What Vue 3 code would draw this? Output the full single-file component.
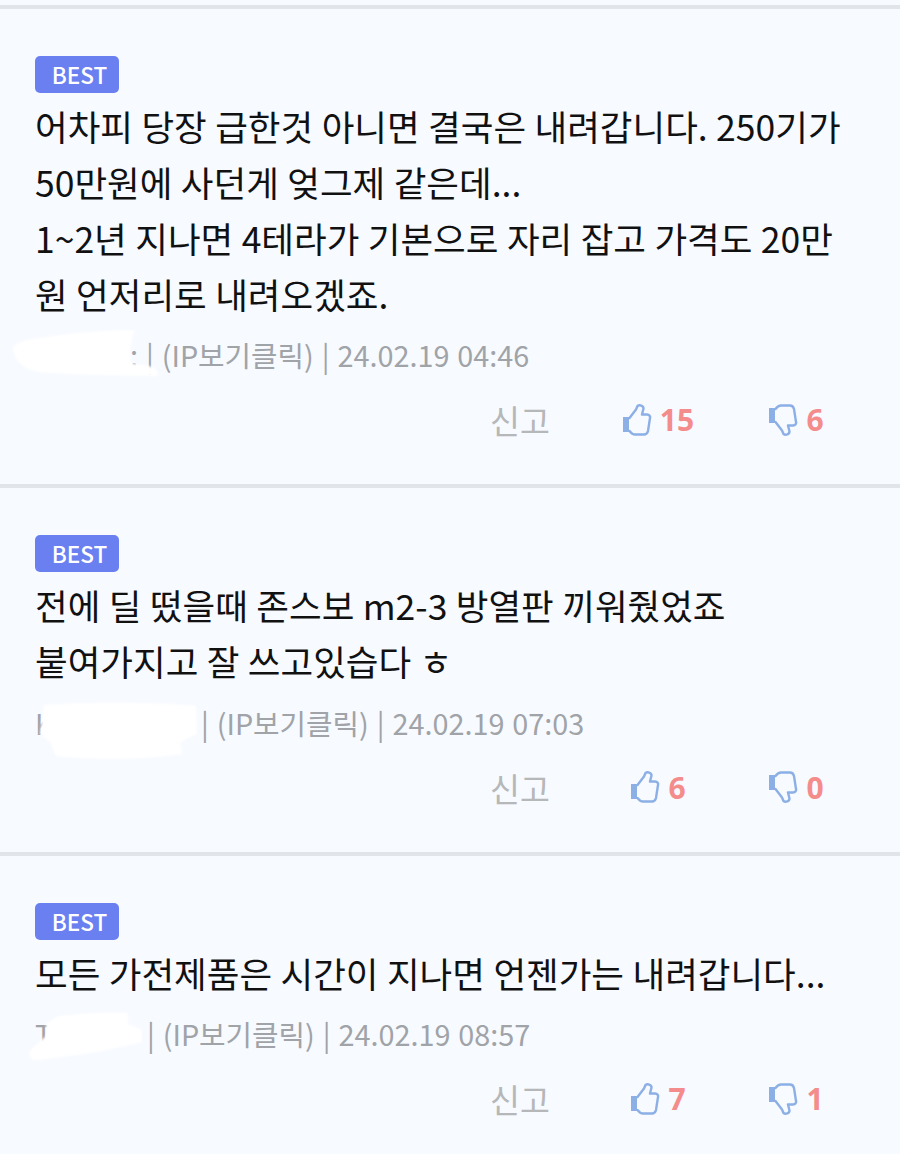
<template>
  <div class="comment-list">
    <div v-for="c in comments" :key="c.date" class="comment">
      <div class="badge">BEST</div>
      <div class="body">
        <p v-for="line in c.lines" :key="line">{{ line }}</p>
      </div>
      <div class="meta">
        <span class="nick" :style="{ width: c.nickWidth + 'px' }">
          <span>{{ c.nick[0] }}</span>
          <span>{{ c.nick[1] }}</span>
        </span>
        <span class="info">| (IP보기클릭) | {{ c.date }}</span>
        <svg class="blob" viewBox="0 0 240 90" aria-hidden="true">
          <path :d="c.blob" fill="#fff" />
        </svg>
      </div>
      <div class="actions">
        <span class="report">신고</span>
        <span class="vote">
          <svg class="hand" viewBox="0 0 30 32">
            <path class="cuff" d="M1 13h6v15H1z" />
            <path class="outline" d="M7.500 14 14 5.500 15.500 2c2-1.500 6-.5 6 2.500L20 10.500h5c2.500 0 3.500 2 3 3.500l-2 13c-.5 2-2 3.500-4 3.500H13c-2 0-4-1.500-5.500-3.500" />
          </svg>
          <b>{{ c.up }}</b>
        </span>
        <span class="vote">
          <svg class="hand" viewBox="0 0 30 32">
            <g transform="matrix(1 0 0 -1 0 32)">
              <path class="cuff" d="M1 13h6v15H1z" />
              <path class="outline" d="M7.500 14 14 5.500 15.500 2c2-1.500 6-.5 6 2.500L20 10.500h5c2.500 0 3.500 2 3 3.500l-2 13c-.5 2-2 3.500-4 3.500H13c-2 0-4-1.500-5.500-3.500" />
            </g>
          </svg>
          <b>{{ c.down }}</b>
        </span>
      </div>
    </div>
  </div>
</template>

<script setup>
const comments = [
  {
    lines: [
      '어차피 당장 급한것 아니면 결국은 내려갑니다. 250기가',
      '50만원에 사던게 엊그제 같은데...',
      '1~2년 지나면 4테라가 기본으로 자리 잡고 가격도 20만',
      '원 언저리로 내려오겠죠.',
    ],
    nick: ['', ':'],
    nickWidth: 111,
    date: '24.02.19 04:46',
    up: 15,
    down: 6,
    blob: 'M13 44C16 36 30 34 48 32C80 27 110 25 135 25C131 34 129 44 131 58C140 60 150 60 156 64C160 70 158 72 152 71C110 70 70 70 40 67C25 65 14 56 13 44Z',
  },
  {
    lines: ['전에 딜 떴을때 존스보 m2-3 방열판 끼워줬었죠', '붙여가지고 잘 쓰고있습다 ㅎ'],
    nick: ['K', ''],
    nickWidth: 166,
    date: '24.02.19 07:03',
    up: 6,
    down: 0,
    blob: 'M44 33C90 30 150 30 196 34L197 62L180 70L182 82C140 88 90 88 56 84L50 70L40 62Z',
  },
  {
    lines: ['모든 가전제품은 시간이 지나면 언젠가는 내려갑니다...'],
    nick: ['T', '~'],
    nickWidth: 112,
    date: '24.02.19 08:57',
    up: 7,
    down: 1,
    blob: 'M58 32C85 29 108 28 128 29L128 40L142 46V58C120 64 80 72 35 76C28 76 27 68 35 62L46 52L46 40Z',
  },
]
</script>

<style>
html, body {
  background: #f7faff;
}
</style>

<style scoped>
.comment-list {
  padding-top: 4.500px;
  font-family: "Noto Sans CJK KR", "Noto Sans", sans-serif;
  color: #111;
}

.comment {
  border-top: 4px solid #e1e4e9;
  padding: 47px 35px 48px;
}

.badge {
  width: 84px;
  height: 37px;
  box-sizing: border-box;
  padding-left: 5px;
  line-height: 37px;
  border-radius: 5px;
  background: #6b80f0;
  color: #fff;
  font-size: 22.500px;
  font-weight: 500;
  text-align: center;
}

.body {
  margin-top: 5px;
  font-size: 35.500px;
  word-spacing: 0.500px;
  line-height: 56px;
  white-space: nowrap;
}

.body p {
  margin: 0;
}

.meta {
  position: relative;
  display: flex;
  align-items: center;
  height: 40px;
  margin-top: 13px;
  font-size: 28.800px;
  color: #a0a3a7;
  white-space: nowrap;
}

.nick {
  flex: none;
  display: flex;
  justify-content: space-between;
  box-sizing: border-box;
  padding-right: 8px;
  overflow: hidden;
}

.info {
  word-spacing: 1.500px;
}

.blob {
  position: absolute;
  left: -35px;
  top: -30px;
  width: 240px;
  height: 90px;
  filter: blur(1px);
}

.actions {
  display: grid;
  grid-template-columns: repeat(3, 138px);
  justify-content: end;
  align-items: center;
  height: 40px;
  margin-top: 21.500px;
  text-align: center;
}

.report {
  font-size: 32.500px;
  color: #b6b7b8;
}

.vote {
  display: flex;
  align-items: center;
  justify-content: center;
  gap: 8px;
}

.vote b {
  font-family: "Open Sans", sans-serif;
  font-size: 30px;
  font-weight: 700;
  color: #f58c8c;
}

.hand {
  flex: none;
  width: 30px;
  height: 32px;
}

.cuff {
  fill: #8cb0e6;
}

.outline {
  fill: none;
  stroke: #8cb0e6;
  stroke-width: 2.400;
  stroke-linejoin: round;
  stroke-linecap: round;
}
</style>
